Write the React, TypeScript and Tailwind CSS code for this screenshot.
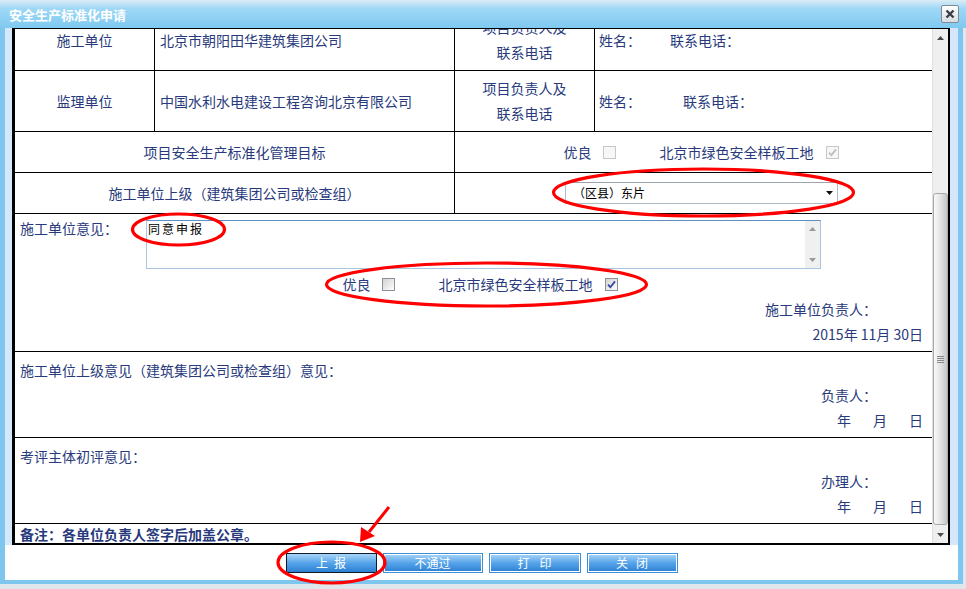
import type { ReactNode } from "react";

function Tri({ down = false, color = "#4a4a4a" }: { down?: boolean; color?: string }) {
  return (
    <svg width="7" height="4" viewBox="0 0 7 4">
      <polygon points={down ? "0,0 7,0 3.5,4" : "0,4 7,4 3.5,0"} fill={color} />
    </svg>
  );
}

function Check({ checked = false, disabled = false }: { checked?: boolean; disabled?: boolean }) {
  return (
    <span
      className={`inline-flex h-[13px] w-[13px] shrink-0 items-center justify-center border ${
        disabled
          ? "border-[#c8c8c8] bg-[#f7f7f7]"
          : "border-[#8c9098] bg-linear-to-br from-[#d2d2d2] to-white"
      }`}
    >
      {checked && (
        <svg width="9" height="9" viewBox="0 0 9 9">
          <path
            d="M1 4.6 L3.4 7.2 L8 1.4"
            fill="none"
            stroke={disabled ? "#bdbdbd" : "#3346a6"}
            strokeWidth="1.8"
          />
        </svg>
      )}
    </span>
  );
}

function Goals({ disabled = false }: { disabled?: boolean }) {
  return (
    <div className="flex items-center">
      <span>优良</span>
      <span className="ml-[11px] flex">
        <Check disabled={disabled} />
      </span>
      <span className="ml-[44px]">北京市绿色安全样板工地</span>
      <span className="ml-[12px] flex">
        <Check checked disabled={disabled} />
      </span>
    </div>
  );
}

function Sign({ who, date }: { who: string; date?: string }) {
  return (
    <>
      <div className="pr-[55px] text-right">{who}</div>
      {date ? (
        <div className="pr-[9px] text-right">{date}</div>
      ) : (
        <div className="flex justify-end gap-[22px] pr-[9px]">
          <span>年</span>
          <span>月</span>
          <span>日</span>
        </div>
      )}
    </>
  );
}

function Scrollbar() {
  return (
    <div className="flex w-[16px] flex-col border-l border-[#dedede] bg-[#efefef]">
      <div className="flex h-[17px] items-center justify-center">
        <Tri />
      </div>
      <div className="h-[147px]" />
      <div className="flex h-[332px] flex-col items-center justify-center gap-[1px] rounded-[3px] border border-[#a9a9a9] bg-linear-to-r from-[#f8f8f8] via-[#e4e4e4] to-[#c6c6c6]">
        <span className="h-[1px] w-[7px] bg-[#8a8a8a]" />
        <span className="h-[1px] w-[7px] bg-[#8a8a8a]" />
        <span className="h-[1px] w-[7px] bg-[#8a8a8a]" />
        <span className="h-[1px] w-[7px] bg-[#8a8a8a]" />
      </div>
      <div className="flex-1" />
      <div className="flex h-[17px] items-center justify-center">
        <Tri down />
      </div>
    </div>
  );
}

function Btn({ children, active = false, w }: { children: ReactNode; active?: boolean; w: string }) {
  return (
    <button
      className={`flex h-[20px] ${w} items-center justify-center gap-[6px] border text-[12px] leading-none text-white ${
        active
          ? "border-[#0f1a2c] bg-linear-to-b from-[#a8d5f7] via-[#55a4ea] to-[#2b7fd2]"
          : "border-[#3d8fd8] bg-linear-to-b from-[#a8d5f7] via-[#55a4ea] to-[#2b7fd2] shadow-[inset_0_0_0_1px_#ffffff]"
      }`}
    >
      {children}
    </button>
  );
}

export default function App() {
  return (
    <div className="relative h-[589px] w-[966px] overflow-hidden bg-[#dfe7ec] font-['Noto_Sans_CJK_SC','Noto_Sans',sans-serif] text-[14px] text-[#283a7c]">
      {/* title bar */}
      <div className="flex h-[28px] items-center justify-between bg-linear-to-b from-[#dcedf5] via-[#9fd8f7] via-30% to-[#7fc9f0] pl-[9px] pr-[7px]">
        <span className="text-[13px] font-bold leading-none text-white">安全生产标准化申请</span>
        <button className="flex h-[18px] w-[18px] items-center justify-center rounded-[2px] border border-[#7f8c98] bg-linear-to-b from-white to-[#d8dde2]">
          <svg width="10" height="10" viewBox="0 0 10 10">
            <path d="M1.5 1.5 L8.5 8.5 M8.5 1.5 L1.5 8.5" stroke="#3a3f45" strokeWidth="2.4" />
          </svg>
        </button>
      </div>

      {/* window body */}
      <div className="mr-[3px] flex h-[556px] flex-col border-x-[5px] border-b-[4px] border-[#7fc6ef] bg-white">
        <div className="flex h-[517px] bg-[#d5e8fb] pl-[7px] pr-[8px]">
          <div className="flex min-w-0 flex-1 border-t border-r-2 border-b-2 border-l-[3px] border-black">
            <div className="min-w-0 flex-1 overflow-hidden bg-white">
              <div className="-mt-[20px] border-t border-black">
                {/* 施工单位 */}
                <div className="flex h-[61px] border-b border-black">
                  <div className="flex w-[140px] items-center justify-center border-r border-black">施工单位</div>
                  <div className="flex w-[300px] items-center border-r border-black pl-[5px]">北京市朝阳田华建筑集团公司</div>
                  <div className="flex w-[140px] flex-col items-center justify-center border-r border-black leading-[25px]">
                    <span>项目负责人及</span>
                    <span>联系电话</span>
                  </div>
                  <div className="flex flex-1 items-center pl-[4px]">
                    <span>姓名：</span>
                    <span className="ml-[29px]">联系电话：</span>
                  </div>
                </div>
                {/* 监理单位 */}
                <div className="flex h-[61px] border-b border-black">
                  <div className="flex w-[140px] items-center justify-center border-r border-black">监理单位</div>
                  <div className="flex w-[300px] items-center border-r border-black pl-[5px]">中国水利水电建设工程咨询北京有限公司</div>
                  <div className="flex w-[140px] flex-col items-center justify-center border-r border-black leading-[25px]">
                    <span>项目负责人及</span>
                    <span>联系电话</span>
                  </div>
                  <div className="flex flex-1 items-center pl-[4px]">
                    <span>姓名：</span>
                    <span className="ml-[42px]">联系电话：</span>
                  </div>
                </div>
                {/* 管理目标 */}
                <div className="flex h-[41px] border-b border-black">
                  <div className="flex w-[440px] items-center justify-center border-r border-black">项目安全生产标准化管理目标</div>
                  <div className="flex flex-1 items-center justify-center pl-[15px]">
                    <Goals disabled />
                  </div>
                </div>
                {/* 上级 */}
                <div className="flex h-[41px] border-b border-black">
                  <div className="flex w-[440px] items-center justify-center border-r border-black">施工单位上级（建筑集团公司或检查组）</div>
                  <div className="flex flex-1 items-center justify-center pl-[16px]">
                    <div className="flex h-[22px] w-[273px] items-center justify-between border border-[#b4bcc6] border-t-[#9da4ad] pl-[7px] pr-[4px] text-[12px] text-black">
                      <span>（区县）东片</span>
                      <Tri down color="#111111" />
                    </div>
                  </div>
                </div>
                {/* 施工单位意见 */}
                <div className="flex h-[138px] flex-col border-b border-black pt-[6px] leading-[25px]">
                  <div className="flex items-start">
                    <span className="w-[131px] pl-[5px] leading-[16px]">施工单位意见：</span>
                    <div className="flex h-[49px] w-[675px] border border-[#a9c4e0] border-t-[#5e90c6]">
                      <div className="flex-1 pl-[1px] pt-[1px] text-[12px] leading-[14px] tracking-[2px] text-black">同意申报</div>
                      <div className="flex w-[15px] flex-col items-center justify-between bg-[#f0f0f0] py-[6px]">
                        <Tri color="#9a9a9a" />
                        <Tri down color="#9a9a9a" />
                      </div>
                    </div>
                  </div>
                  <div className="mt-[3px] flex justify-center pl-[13px]">
                    <Goals />
                  </div>
                  <Sign who="施工单位负责人：" date="2015年 11月 30日" />
                </div>
                {/* 上级意见 */}
                <div className="flex h-[86px] flex-col border-b border-black pt-[6px] leading-[25px]">
                  <div className="pl-[5px]">施工单位上级意见（建筑集团公司或检查组）意见：</div>
                  <Sign who="负责人：" />
                </div>
                {/* 初评意见 */}
                <div className="flex h-[86px] flex-col border-b border-black pt-[6px] leading-[25px]">
                  <div className="pl-[5px]">考评主体初评意见：</div>
                  <Sign who="办理人：" />
                </div>
                <div className="h-[30px] pl-[5px] font-bold leading-[20px]">备注：各单位负责人签字后加盖公章。</div>
              </div>
            </div>
            <Scrollbar />
          </div>
        </div>

        {/* buttons */}
        <div className="flex flex-1 items-center justify-center gap-[6px]">
          <Btn active w="w-[91px]">
            <span>上</span>
            <span>报</span>
          </Btn>
          <Btn w="w-[100px]">不通过</Btn>
          <Btn w="w-[92px]">
            <span>打</span>
            <span className="ml-[4px]">印</span>
          </Btn>
          <Btn w="w-[91px]">
            <span>关</span>
            <span className="ml-[2px]">闭</span>
          </Btn>
        </div>
      </div>

      {/* red annotation marks */}
      <svg className="pointer-events-none absolute inset-0" width="966" height="589" viewBox="0 0 966 589">
        <g fill="none" stroke="#ff0000" strokeWidth="3.2">
          <ellipse cx="703.5" cy="192.5" rx="150" ry="23.5" />
          <ellipse cx="178.5" cy="229.5" rx="46" ry="15.5" />
          <ellipse cx="486.5" cy="284.5" rx="160" ry="21.5" />
          <ellipse cx="331.5" cy="562.5" rx="53.5" ry="20.5" />
          <path d="M389 507 L369 532" strokeWidth="3" />
        </g>
        <polygon points="360,542 361,527 375,536" fill="#ff0000" />
      </svg>
    </div>
  );
}
